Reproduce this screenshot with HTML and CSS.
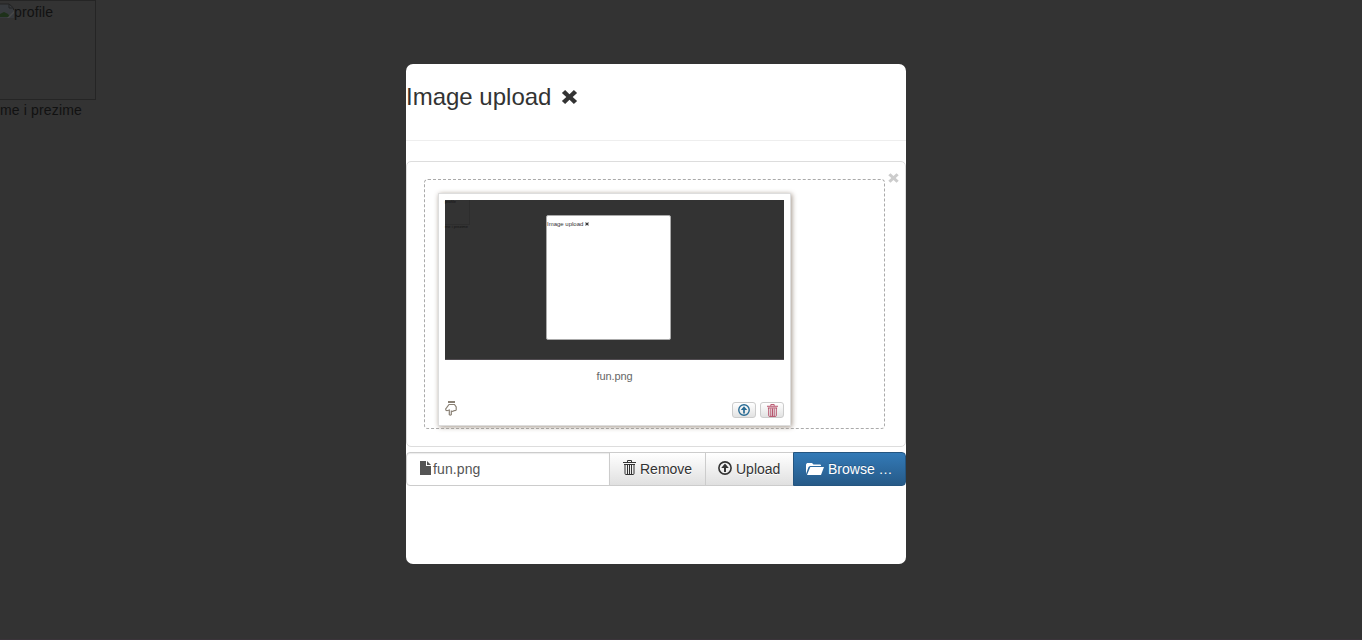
FILE: index.html
```html
<!DOCTYPE html>
<html lang="en">
<head>
<meta charset="utf-8">
<title>Image upload</title>
<link rel="stylesheet" href="styles.css">
</head>
<body>
<svg class="defs" aria-hidden="true">
  <symbol id="remove" viewBox="0 0 16 16"><path d="M3.600 1 8 5.200 12.400 1 15.600 4 11.200 8l4.400 4-3.200 3L8 10.800 3.600 15 .4 12l4.400-4L.4 4z"/></symbol>
  <symbol id="file" viewBox="0 0 11 14"><path d="M0 0h6v5h5v9H0zM7 0l4 4H7z"/></symbol>
  <symbol id="trash" viewBox="0 0 13 15"><path d="M4.500 2V.5h4V2M0 2.500h13M1 4.500h11M2 4.500v9q0 1 1 1h7q1 0 1-1v-9M4.500 5v9M6.500 5v9M8.500 5v9" fill="none" stroke="currentColor"/></symbol>
  <symbol id="upload" viewBox="0 0 14 14"><circle cx="7" cy="7" r="6.100" fill="none" stroke="currentColor" stroke-width="1.600"/><path d="M7 2.600 10.800 7H8v4H6V7H3.200z"/></symbol>
  <symbol id="folder" viewBox="0 0 18 14"><path d="M0 12V2.500L1 1h5l1.500 1.500H14q1 0 1 1V4H4L2.500 5zM4.300 5H18l-3 8H1z"/></symbol>
  <symbol id="hand" viewBox="0 0 12 15"><path d="M3 0h7v2H3z"/><path d="M4 3.500h5.500l1.700 2.500v3q-.8 1-2.200.6-1 1-2.700.6v3.500q-1 1-2 0V9L2 9.700Q.6 9.500.7 8z" fill="none" stroke="currentColor" stroke-width="1.200"/></symbol>
</svg>
<div class="profile">
  <div class="photo">
    <svg class="broken" viewBox="0 0 14 16"><path d="M0 1h9l5 4v10H0z" fill="#373a3e"/><path d="M0 1h9l4.500 4v2M9 1v4h4" fill="none" stroke="#232323"/><path d="M0 14v-3l4-2 4 2 2 3z" fill="#1e311a"/><path d="m7 15 7-7v2l-5 5z" fill="#484848"/></svg><span>profile</span>
  </div>
  <div class="name">me i prezime</div>
</div>
<main class="modal">
  <h3 class="title">Image upload <svg class="title-x"><use href="#remove"/></svg></h3>
  <section class="preview">
    <svg class="close"><use href="#remove"/></svg>
    <div class="dropzone">
      <div class="frame">
        <div class="shot">
          <div class="mini-profile"><div class="mini-photo">profile</div><div>me i prezime</div></div>
          <div class="mini-modal">Image upload <svg class="mini-x"><use href="#remove"/></svg></div>
        </div>
        <div class="caption">fun.png</div>
        <div class="actions">
          <svg class="hand"><use href="#hand"/></svg>
          <button class="mini-btn blue"><svg class="up"><use href="#upload"/></svg></button>
          <button class="mini-btn red"><svg class="bin"><use href="#trash"/></svg></button>
        </div>
      </div>
    </div>
  </section>
  <div class="group">
    <div class="field"><svg class="i-file"><use href="#file"/></svg><span>fun.png</span></div>
    <button class="btn remove"><svg class="i-trash"><use href="#trash"/></svg>Remove</button>
    <button class="btn send"><svg class="i-upload"><use href="#upload"/></svg>Upload</button>
    <button class="btn browse"><svg class="i-folder"><use href="#folder"/></svg>Browse …</button>
  </div>
</main>
</body>
</html>
```
FILE: styles.css
```css
* { box-sizing: border-box; }
html, body { height: 640px; margin: 0; overflow: hidden; }
body {
  display: grid;
  grid-template-columns: 406px 500px;
  align-items: start;
  background: #333;
  border-bottom: 1px solid #3a343a;
  font: 14px/20px "Liberation Sans", Arial, sans-serif;
  color: #333;
}
svg { fill: currentColor; flex: none; }
.defs { position: absolute; width: 0; height: 0; }
.profile { color: #111; letter-spacing: .15px; }
.photo {
  display: flex;
  align-items: flex-start;
  width: 96px;
  height: 100px;
  padding-top: 2px;
  border: 1px solid #252525;
  border-left: 0;
}
.broken { width: 14px; height: 16px; }
.photo span { line-height: 19px; }
.modal { height: 500px; margin-top: 64px; background: #fff; border-radius: 7px; }
.title {
  display: flex;
  align-items: center;
  height: 77px;
  margin: 0 0 20px;
  padding-bottom: 11px;
  border-bottom: 1px solid #eee;
  font-size: 24px;
  font-weight: 400;
  line-height: 26px;
}
.title-x { width: 17px; height: 16px; margin: 1px 0 0 10px; }
.preview {
  position: relative;
  height: 286px;
  padding: 17px 20px 17px 17px;
  border: 1px solid #ddd;
  border-radius: 5px;
}
.close { position: absolute; top: 10px; right: 6px; width: 11px; height: 12px; color: #ccc; }
.dropzone { height: 250px; padding: 13px; border: 1px dashed #aaa; border-radius: 4px; }
.frame {
  width: 353px;
  height: 233px;
  padding: 6px;
  border: 1px solid #ddd;
  background: #fff;
  box-shadow: 1px 1px 5px #a2958a;
}
.shot {
  display: flex;
  width: 339px;
  height: 160px;
  background: #333;
  border-bottom: 1px solid #514c51;
}
.mini-profile { width: 101px; font-size: 4px; line-height: 4px; letter-spacing: 0; color: #151515; }
.mini-photo { width: 25px; height: 25px; border: 1px solid #2d2d2d; border-left: 0; border-top: 0; }
.mini-modal {
  width: 125px;
  height: 125px;
  margin-top: 15px;
  padding-top: 5px;
  border: 1px solid #aaa;
  border-radius: 2px;
  background: #fff;
  font-size: 6px;
  line-height: 7px;
}
.mini-x { width: 4px; height: 4px; }
.caption { padding-top: 9px; text-align: center; font-size: 11px; line-height: 14px; letter-spacing: -.1px; color: #666; }
.actions { display: flex; align-items: center; height: 18px; margin-top: 18px; gap: 4px; }
.hand { width: 12px; height: 15px; margin: -4px auto 0 0; color: #8a8175; }
.mini-btn {
  display: flex;
  align-items: center;
  justify-content: center;
  width: 24px;
  height: 16px;
  padding: 0;
  border: 1px solid #ccc;
  border-radius: 3px;
  background: linear-gradient(#fff, #e2e2e2);
}
.blue { color: #286b94; }
.red { color: #ad3654; }
.up { width: 12px; height: 12px; }
.bin { width: 11px; height: 13px; }
.group { display: flex; height: 34px; margin-top: 5px; }
.field {
  display: flex;
  align-items: center;
  width: 204px;
  padding-left: 13px;
  border: 1px solid #ccc;
  border-radius: 4px 0 0 4px;
  color: #555;
  letter-spacing: .1px;
  box-shadow: inset 0 1px 1px rgba(0,0,0,.08);
}
.i-file { width: 11px; height: 14px; margin: -2px 2px 0 0; }
.btn {
  display: flex;
  align-items: center;
  margin: 0 0 0 -1px;
  padding: 0 0 0 12px;
  border: 1px solid #ccc;
  background: linear-gradient(#fff, #e0e0e0);
  color: #333;
  font: inherit;
  text-shadow: 0 1px 0 #fff;
  white-space: nowrap;
}
.remove { width: 97px; }
.send { width: 89px; }
.browse {
  width: 113px;
  border-color: #245580;
  border-radius: 0 4px 4px 0;
  background: linear-gradient(#337ab7, #265a88);
  color: #fff;
  text-shadow: 0 -1px 0 rgba(0,0,0,.2);
}
.i-trash { width: 13px; height: 15px; margin: -3px 4px 0 1px; }
.i-upload { width: 14px; height: 14px; margin: -2px 4px 0 0; }
.i-folder { width: 18px; height: 14px; margin-right: 4px; }
```
